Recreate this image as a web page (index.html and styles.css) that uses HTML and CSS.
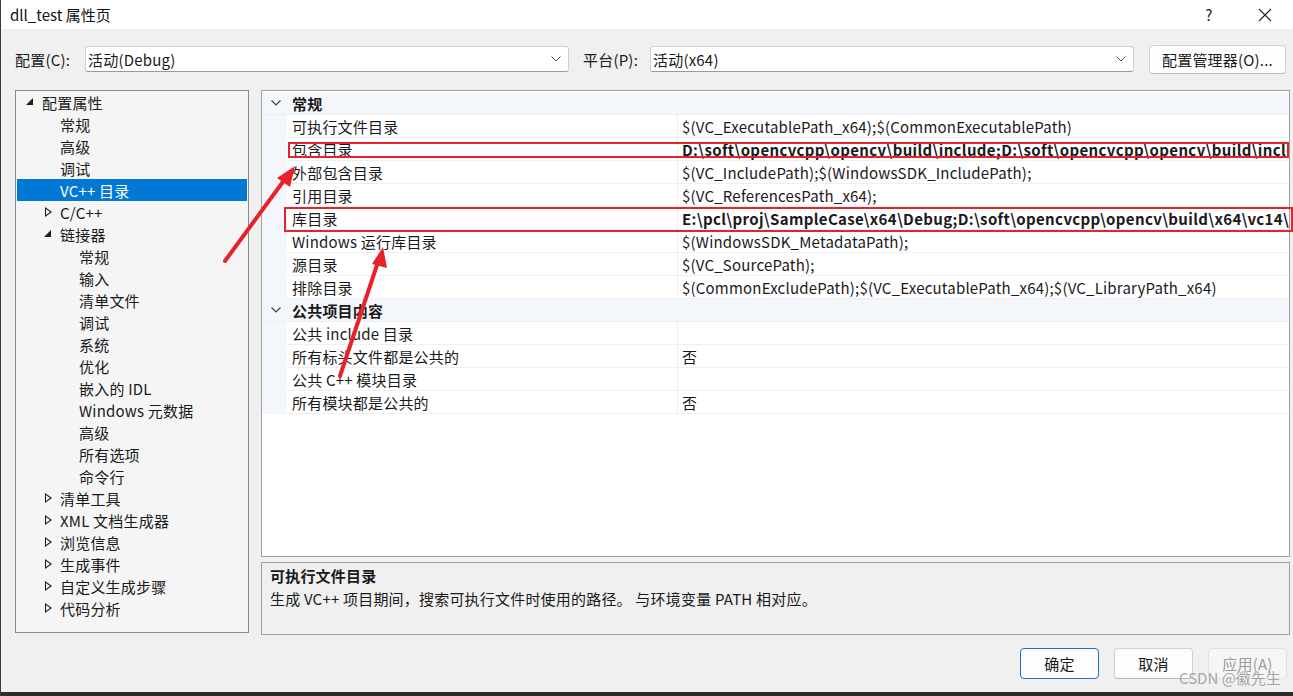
FILE: index.html
```html
<!DOCTYPE html>
<html lang="zh-CN">
<head>
<meta charset="utf-8">
<title>dll_test 属性页</title>
<link rel="stylesheet" href="styles.css">
</head>
<body>
<div class="window">
  <div class="titlebar">
    <div class="title">dll_test 属性页</div>
    <div class="tb-btn help">?</div>
    <div class="tb-btn close">
      <svg width="14" height="14" viewBox="0 0 14 14"><path d="M1 1 L13 13 M13 1 L1 13" stroke="#222" stroke-width="1.1" fill="none"/></svg>
    </div>
  </div>
  <div class="main">
    <div class="config-row">
      <span class="cfg-label">配置(C):</span>
      <div class="combo combo-cfg"><span>活动(Debug)</span><svg class="chev" width="10" height="6" viewBox="0 0 10 6"><path d="M0.5 0.5 L5 5 L9.5 0.5" stroke="#555" stroke-width="1" fill="none"/></svg></div>
      <span class="cfg-label plat">平台(P):</span>
      <div class="combo combo-plat"><span>活动(x64)</span><svg class="chev" width="10" height="6" viewBox="0 0 10 6"><path d="M0.5 0.5 L5 5 L9.5 0.5" stroke="#555" stroke-width="1" fill="none"/></svg></div>
      <div class="btn mgr">配置管理器(O)...</div>
    </div>
    <div class="content">
      <div class="tree">
        <div class="node l0"><span class="exp-open"></span>配置属性</div>
        <div class="node l1"><span class="sp"></span>常规</div>
        <div class="node l1"><span class="sp"></span>高级</div>
        <div class="node l1"><span class="sp"></span>调试</div>
        <div class="node l1 sel"><span class="sp"></span>VC++ 目录</div>
        <div class="node l1"><span class="exp-closed"></span>C/C++</div>
        <div class="node l1"><span class="exp-open"></span>链接器</div>
        <div class="node l2">常规</div>
        <div class="node l2">输入</div>
        <div class="node l2">清单文件</div>
        <div class="node l2">调试</div>
        <div class="node l2">系统</div>
        <div class="node l2">优化</div>
        <div class="node l2">嵌入的 IDL</div>
        <div class="node l2">Windows 元数据</div>
        <div class="node l2">高级</div>
        <div class="node l2">所有选项</div>
        <div class="node l2">命令行</div>
        <div class="node l1"><span class="exp-closed"></span>清单工具</div>
        <div class="node l1"><span class="exp-closed"></span>XML 文档生成器</div>
        <div class="node l1"><span class="exp-closed"></span>浏览信息</div>
        <div class="node l1"><span class="exp-closed"></span>生成事件</div>
        <div class="node l1"><span class="exp-closed"></span>自定义生成步骤</div>
        <div class="node l1"><span class="exp-closed"></span>代码分析</div>
      </div>
      <div class="right">
        <div class="grid">
          <div class="cat"><span class="cat-chev"><svg width="10" height="6" viewBox="0 0 10 6"><path d="M0.5 0.5 L5 5 L9.5 0.5" stroke="#444" stroke-width="1.2" fill="none"/></svg></span><span class="cat-name">常规</span></div>
          <div class="row"><span class="gut"></span><span class="name">可执行文件目录</span><span class="val">$(VC_ExecutablePath_x64);$(CommonExecutablePath)</span></div>
          <div class="row"><span class="gut"></span><span class="name">包含目录</span><span class="val bold">D:\soft\opencvcpp\opencv\build\include;D:\soft\opencvcpp\opencv\build\include\opencv2;$(IncludePath)</span></div>
          <div class="row"><span class="gut"></span><span class="name">外部包含目录</span><span class="val">$(VC_IncludePath);$(WindowsSDK_IncludePath);</span></div>
          <div class="row"><span class="gut"></span><span class="name">引用目录</span><span class="val">$(VC_ReferencesPath_x64);</span></div>
          <div class="row"><span class="gut"></span><span class="name">库目录</span><span class="val bold">E:\pcl\proj\SampleCase\x64\Debug;D:\soft\opencvcpp\opencv\build\x64\vc14\lib;$(LibraryPath)</span></div>
          <div class="row"><span class="gut"></span><span class="name">Windows 运行库目录</span><span class="val">$(WindowsSDK_MetadataPath);</span></div>
          <div class="row"><span class="gut"></span><span class="name">源目录</span><span class="val">$(VC_SourcePath);</span></div>
          <div class="row"><span class="gut"></span><span class="name">排除目录</span><span class="val">$(CommonExcludePath);$(VC_ExecutablePath_x64);$(VC_LibraryPath_x64)</span></div>
          <div class="cat"><span class="cat-chev"><svg width="10" height="6" viewBox="0 0 10 6"><path d="M0.5 0.5 L5 5 L9.5 0.5" stroke="#444" stroke-width="1.2" fill="none"/></svg></span><span class="cat-name">公共项目内容</span></div>
          <div class="row"><span class="gut"></span><span class="name">公共 include 目录</span><span class="val"></span></div>
          <div class="row"><span class="gut"></span><span class="name">所有标头文件都是公共的</span><span class="val">否</span></div>
          <div class="row"><span class="gut"></span><span class="name">公共 C++ 模块目录</span><span class="val"></span></div>
          <div class="row"><span class="gut"></span><span class="name">所有模块都是公共的</span><span class="val">否</span></div>
        </div>
        <div class="desc">
          <div class="desc-title">可执行文件目录</div>
          <div class="desc-text">生成 VC++ 项目期间，搜索可执行文件时使用的路径。 与环境变量 PATH 相对应。</div>
        </div>
      </div>
    </div>
    <div class="buttons">
      <div class="btn dlg default">确定</div>
      <div class="btn dlg">取消</div>
      <div class="btn dlg disabled">应用(A)</div>
    </div>
  </div>
  <div class="bottom-band"></div>

  <div class="redbox box1"></div>
  <div class="redbox box2"></div>
  <svg class="arrows" width="1293" height="696" viewBox="0 0 1293 696">
    <line x1="224" y1="261" x2="284" y2="179" stroke="#e8222a" stroke-width="4" stroke-linecap="round"/>
    <polygon points="294,166 276,178 289,187" fill="#e8222a"/>
    <line x1="339" y1="376" x2="377" y2="262" stroke="#e8222a" stroke-width="4" stroke-linecap="round"/>
    <polygon points="382,247 371,264 386,268" fill="#e8222a"/>
  </svg>
  <div class="watermark">CSDN @徽先生</div>
</div>
</body>
</html>
```
FILE: styles.css
```css
* { box-sizing: border-box; }
html, body { margin: 0; padding: 0; }
body {
  width: 1293px;
  height: 696px;
  overflow: hidden;
  font-family: "Noto Sans CJK SC", "Noto Sans", sans-serif;
  font-size: 15px;
  letter-spacing: 0.2px;
  color: #1a1a1a;
  background: #f0f0f0;
}
.window {
  position: relative;
  width: 1293px;
  height: 696px;
  border-left: 1px solid #3a3a3a;
  display: flex;
  flex-direction: column;
}
.titlebar {
  height: 29px;
  background: #ffffff;
  display: flex;
  align-items: center;
  padding-left: 9px;
}
.title { flex: 1; font-size: 15px; letter-spacing: 0; color: #111; }
.tb-btn { width: 56px; display: flex; justify-content: center; align-items: center; }
.help { font-size: 15px; color: #222; }
.main {
  flex: 1;
  background: #f0f0f0;
  display: flex;
  flex-direction: column;
}
.config-row {
  display: flex;
  align-items: center;
  height: 28px;
  margin-top: 16px;
  padding-left: 14px;
}
.cfg-label { width: 70px; }
.cfg-label.plat { width: 67px; margin-left: 14px; }
.combo {
  height: 26px;
  background: #fff;
  border: 1px solid #d0d0d0;
  border-bottom-color: #9a9a9a;
  border-radius: 3px;
  display: flex;
  align-items: center;
  padding: 0 6px 0 2px;
  justify-content: space-between;
}
.combo-cfg { width: 484px; }
.combo-plat { width: 484px; }
.chev { margin-right: 1px; }
.btn {
  background: #fdfdfd;
  border: 1px solid #d2d2d2;
  border-bottom-color: #b8b8b8;
  border-radius: 4px;
  display: flex;
  align-items: center;
  justify-content: center;
}
.mgr { width: 137px; height: 29px; margin-left: 15px; }
.content {
  display: flex;
  margin-top: 17px;
  padding-left: 14px;
}
.tree {
  width: 234px;
  height: 543px;
  border: 1px solid #8c8c8c;
  background: #f5f5f5;
  padding: 0 1px 1px 1px;
}
.node {
  height: 22px;
  display: flex;
  align-items: center;
  white-space: nowrap;
}
.node.l0 { padding-left: 7px; }
.node.l1 { padding-left: 25px; }
.node.l2 { padding-left: 62px; }
.node.sel { background: #0078d4; color: #fff; }
.exp-open, .exp-closed, .sp {
  display: inline-block;
  width: 18px;
  height: 10px;
  flex: none;
}
.exp-open { position: relative; }
.exp-open::before {
  content: "";
  position: absolute;
  left: 2px;
  top: 1px;
  border-style: solid;
  border-width: 0 0 7px 7px;
  border-color: transparent transparent #1e1e1e transparent;
}
.exp-closed { position: relative; }
.exp-closed::before {
  content: "";
  position: absolute;
  left: 3px;
  top: 0;
  border-style: solid;
  border-width: 5px 0 5px 7px;
  border-color: transparent transparent transparent #1e1e1e;
}
.exp-closed::after {
  content: "";
  position: absolute;
  left: 4px;
  top: 2px;
  border-style: solid;
  border-width: 3px 0 3px 4px;
  border-color: transparent transparent transparent #f5f5f5;
}
.right {
  margin-left: 12px;
  width: 1029px;
  display: flex;
  flex-direction: column;
}
.grid {
  height: 467px;
  border: 1px solid #a0a0a0;
  background: #fff;
  padding-top: 1px;
  overflow: hidden;
}
.cat {
  height: 23px;
  background: #f3f6fa;
  display: flex;
  align-items: center;
  border-bottom: 1px solid #eceff3;
}
.cat-chev { width: 25px; display: flex; justify-content: center; padding-left: 2px; }
.cat-name { font-weight: bold; padding-left: 5px; }
.row {
  height: 23px;
  display: flex;
  align-items: stretch;
  white-space: nowrap;
}
.gut { width: 25px; background: #f3f6fa; flex: none; }
.name {
  width: 391px;
  flex: none;
  padding-left: 5px;
  display: flex;
  align-items: center;
  border-bottom: 1px solid #eceff3;
  border-right: 1px solid #eceff3;
}
.val {
  flex: 1;
  padding-left: 4px;
  display: flex;
  align-items: center;
  overflow: hidden;
  border-bottom: 1px solid #eceff3;
}
.val.bold { font-weight: bold; letter-spacing: 0.35px; }
.desc {
  margin-top: 5px;
  height: 73px;
  border: 1px solid #a0a0a0;
  background: #f0f0f0;
  padding: 1px 8px;
}
.desc-title { font-weight: bold; height: 22px; display: flex; align-items: center; }
.desc-text { height: 25px; display: flex; align-items: center; }
.buttons {
  display: flex;
  justify-content: flex-end;
  gap: 15px;
  margin-top: 13px;
  padding-right: 6px;
}
.btn.dlg { width: 79px; height: 31px; }
.btn.default { border: 1px solid #1f6fc4; }
.btn.disabled { color: #9c9c9c; background: #f6f6f6; border-color: #e2e2e2; }
.bottom-band {
  height: 4px;
  background: #2c2c2c;
}
.redbox {
  position: absolute;
  border: 2px solid #e3232d;
  pointer-events: none;
}
.box1 { left: 287px; top: 142px; width: 1001px; height: 16px; }
.box2 { left: 283px; top: 207px; width: 1009px; height: 25px; }
.arrows { position: absolute; left: 0; top: 0; pointer-events: none; }
.watermark {
  position: absolute;
  left: 1178px;
  top: 667px;
  font-size: 15px;
  letter-spacing: 0;
  color: rgba(140, 140, 140, 0.75);
}
```
